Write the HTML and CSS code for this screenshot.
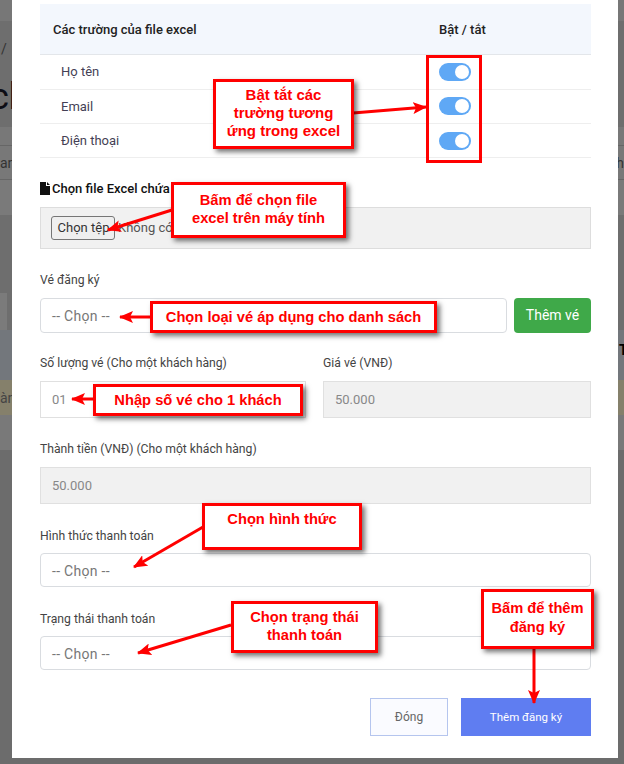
FILE: index.html
```html
<!DOCTYPE html>
<html lang="vi">
<head>
  <meta charset="UTF-8" />
  <title>Thêm đăng ký</title>
  <link rel="stylesheet" href="styles.css">
</head>
<body>
  <div class="trang-nen">
    <div class="dai dai-dau"></div>
    <div class="dai dai-tieude">
      <span class="gach">/</span>
      <span class="tieude-lon">ch</span>
    </div>
    <div class="dai dai-sang"></div>
    <div class="dai dai-bang"><span>an</span><span>ah</span></div>
    <div class="dai dai-sang2"></div>
    <div class="dai dai-toi"></div>
    <div class="dai dai-o"><span class="o-nho"></span></div>
    <div class="dai dai-xanh"><span></span><strong>T</strong></div>
    <div class="dai dai-vang"><span>àn</span></div>
    <div class="dai dai-sang3"></div>
  </div>

  <div class="hop-thoai">
    <table class="bang-truong">
      <thead>
        <tr>
          <th>Các trường của file excel</th>
          <th class="cot-bat">Bật / tắt</th>
        </tr>
      </thead>
      <tbody>
        <tr>
          <td>Họ tên</td>
          <td class="cot-bat"><span class="cong-tac"></span></td>
        </tr>
        <tr>
          <td>Email</td>
          <td class="cot-bat"><span class="cong-tac"></span></td>
        </tr>
        <tr>
          <td>Điện thoại</td>
          <td class="cot-bat"><span class="cong-tac"></span></td>
        </tr>
      </tbody>
    </table>

    <div class="nhan-file">
      <svg width="10" height="13" viewBox="0 0 10 13"><path d="M0 0H6V4H10V13H0Z M7 0L10 3H7Z" fill="#111"/></svg>
      <span>Chọn file Excel chứa danh sách</span>
    </div>
    <div class="o-file">
      <button class="nut-tep">Chọn tệp</button>
      <span>Không có tệp nào được chọn</span>
    </div>

    <label class="nhan nhan-ve">Vé đăng ký</label>
    <div class="hang-ve">
      <div class="o-chon">-- Chọn --</div>
      <button class="nut-them-ve">Thêm vé</button>
    </div>

    <div class="hang-doi">
      <div>
        <label class="nhan">Số lượng vé (Cho một khách hàng)</label>
        <div class="o-nhap">01</div>
      </div>
      <div>
        <label class="nhan">Giá vé (VNĐ)</label>
        <div class="o-nhap o-khoa">50.000</div>
      </div>
    </div>

    <label class="nhan">Thành tiền (VNĐ) (Cho một khách hàng)</label>
    <div class="o-nhap o-khoa">50.000</div>

    <label class="nhan nhan-tt">Hình thức thanh toán</label>
    <div class="o-chon">-- Chọn --</div>

    <label class="nhan nhan-tt">Trạng thái thanh toán</label>
    <div class="o-chon">-- Chọn --</div>

    <div class="chan-hop">
      <button class="nut-dong">Đóng</button>
      <button class="nut-them">Thêm đăng ký</button>
    </div>
  </div>

  <!-- phan ghi chu mau do ve de len tren -->
  <svg class="mui-ten" width="624" height="764" viewBox="0 0 624 764">
    <defs>
      <marker id="dau" markerUnits="userSpaceOnUse" markerWidth="14" markerHeight="12" refX="13" refY="6" orient="auto">
        <path d="M0 0L14 6L0 12L3 6Z" fill="#f00"/>
      </marker>
    </defs>
    <g stroke="#f00" stroke-width="3" marker-end="url(#dau)">
      <line x1="353" y1="113" x2="426" y2="107"/>
      <line x1="172" y1="210" x2="108" y2="230"/>
      <line x1="150" y1="317" x2="120" y2="317"/>
      <line x1="93" y1="399" x2="72" y2="399"/>
      <line x1="203" y1="527" x2="134" y2="567"/>
      <line x1="231" y1="625" x2="138" y2="653"/>
      <line x1="534" y1="648" x2="534" y2="703"/>
    </g>
  </svg>
  <div class="khung-bat"></div>
  <div class="ghi-chu gc-bat">Bật tắt các<br>trường tương<br>ứng trong excel</div>
  <div class="ghi-chu gc-file">Bấm để chọn file<br>excel trên máy tính</div>
  <div class="ghi-chu gc-ve">Chọn loại vé áp dụng cho danh sách</div>
  <div class="ghi-chu gc-so">Nhập số vé cho 1 khách</div>
  <div class="ghi-chu gc-hinh">Chọn hình thức</div>
  <div class="ghi-chu gc-trang">Chọn trạng thái<br>thanh toán</div>
  <div class="ghi-chu gc-them">Bấm để thêm<br>đăng ký</div>
</body>
</html>
```

FILE: styles.css
```css
* {
  box-sizing: border-box;
}

body {
  margin: 0;
  width: 624px;
  height: 764px;
  overflow: hidden;
  position: relative;
  font-family: "Roboto", "Noto Sans", sans-serif;
  font-size: 12.2px;
  color: #444;
  background-color: #6c6c6c;
}

/* trang phia sau, bi lam toi */
.trang-nen {
  position: absolute;
  inset: 0;
}

.dai {
  display: flex;
  justify-content: space-between;
  align-items: center;
  font-size: 14px;
  color: #333;
}

.dai-dau { height: 21px; background-color: #777; }
.dai-tieude { height: 106px; background-color: #6e6e6e; display: block; }
.dai-sang { height: 18px; background-color: #787878; }
.dai-bang { height: 35px; background-color: #787878; border-top: 1px solid #666; border-bottom: 1px solid #666; }
.dai-sang2 { height: 35px; background-color: #7a7a7a; }
.dai-toi { height: 78px; background-color: #6e6e6e; }
.dai-o { height: 37px; background-color: #6e6e6e; align-items: stretch; }
.dai-xanh { height: 50px; background-color: #73777c; align-items: flex-end; padding: 0 0 22px 619px; color: #000; }
.dai-vang { height: 35px; background-color: #85806b; color: #444; }
.dai-sang3 { height: 35px; background-color: #797979; }

.o-nho {
  width: 7px;
  background-color: #7b7b7b;
}

.gach {
  display: block;
  padding: 20px 0 0 1px;
  line-height: 16px;
}

.tieude-lon {
  display: block;
  margin: 20px 0 0 -10px;
  font-size: 36px;
  line-height: 40px;
  color: #0c0c14;
}

.hop-thoai {
  position: absolute;
  top: 0;
  left: 12px;
  width: 606px;
  height: 758px;
  padding: 4px 27px 0 28px;
  background-color: #fff;
}

.bang-truong {
  width: 551px;
  border-collapse: collapse;
  table-layout: fixed;
}

.bang-truong th {
  height: 50px;
  padding: 2px 0 0 13px;
  text-align: left;
  font-size: 13px;
  font-weight: 500;
  color: #222;
  background-color: #f3f7fd;
  border-bottom: 1px solid #e3e6ea;
}

.bang-truong td {
  height: 34px;
  padding: 0 0 0 21px;
  font-size: 13px;
  color: #443f55;
  border-bottom: 1px solid #eee;
}

.bang-truong tbody tr:first-child td {
  height: 35px;
}

.bang-truong .cot-bat {
  width: 152px;
  padding: 0;
}

.bang-truong th.cot-bat {
  padding-top: 2px;
}

.bang-truong td.cot-bat {
  line-height: 0;
}

.bang-truong tbody tr:last-child .cot-bat {
  padding-top: 2px;
}

.cong-tac {
  display: inline-block;
  position: relative;
  width: 32px;
  height: 18px;
  border-radius: 9px;
  background-color: #5fa8f5;
}

.cong-tac::after {
  content: "";
  position: absolute;
  top: 2px;
  right: 2px;
  width: 14px;
  height: 14px;
  border-radius: 50%;
  background-color: #fff;
}

.nhan-file {
  display: flex;
  align-items: center;
  gap: 2px;
  margin-top: 24px;
  font-size: 13px;
  font-weight: 500;
  line-height: 14px;
  color: #111;
}

.o-file {
  display: flex;
  align-items: center;
  gap: 3px;
  height: 42px;
  margin-top: 11px;
  padding-left: 10px;
  font-size: 13px;
  color: #555;
  background-color: #f1f1f1;
  border: 1px solid #ddd;
}

.nut-tep {
  width: 64px;
  height: 24px;
  padding: 0 0 0 1px;
  font-family: inherit;
  font-size: 13px;
  color: #333;
  background-color: #efefef;
  border: 1px solid #767676;
  border-radius: 3px;
}

.nhan {
  display: block;
  height: 18px;
  margin: 22px 0 9px;
  line-height: 18px;
  color: #444;
}

.nhan-tt {
  margin: 23px 0 8px;
}

.hang-ve {
  display: grid;
  grid-template-columns: 467px 77px;
  gap: 7px;
}

.o-chon {
  height: 34px;
  padding-left: 11px;
  line-height: 34px;
  font-size: 14px;
  letter-spacing: 0.3px;
  color: #777;
  background-color: #fff;
  border: 1px solid #d9dce0;
  border-radius: 4px;
}

.hang-ve .o-chon {
  height: 35px;
}

.nut-them-ve {
  height: 35px;
  padding: 0;
  font-family: inherit;
  font-size: 14px;
  color: #fff;
  background-color: #3fa949;
  border: none;
  border-radius: 4px;
}

.hang-doi {
  display: grid;
  grid-template-columns: 266px 268px;
  gap: 17px;
}

.hang-doi .nhan {
  margin-top: 21px;
}

.o-nhap {
  height: 37px;
  padding-left: 11px;
  line-height: 35px;
  font-size: 13px;
  color: #888;
  background-color: #fff;
  border: 1px solid #e0e0e0;
}

.o-khoa {
  background-color: #f1f1f1;
}

.chan-hop {
  display: flex;
  justify-content: flex-end;
  gap: 13px;
  margin-top: 28px;
}

.nut-dong,
.nut-them {
  height: 38px;
  padding: 0;
  font-family: inherit;
}

.nut-dong {
  width: 78px;
  font-size: 12px;
  color: #666;
  background-color: #fafbff;
  border: 1px solid #b5c5ee;
}

.nut-them {
  width: 130px;
  font-size: 11.5px;
  color: #fff;
  background-color: #5f7df1;
  border: none;
}

.mui-ten {
  position: absolute;
  top: 0;
  left: 0;
}

.khung-bat {
  position: absolute;
  left: 426px;
  top: 55px;
  width: 56px;
  height: 108px;
  border: 3px solid #f00;
}

.ghi-chu {
  position: absolute;
  padding-top: 4px;
  font-family: "Liberation Sans", Arial, sans-serif;
  font-size: 14.7px;
  font-weight: bold;
  line-height: 18px;
  text-align: center;
  color: #f00;
  background-color: #fff;
  border: 3px solid #f00;
  box-shadow: 3px 3px 5px rgba(0, 0, 0, 0.55);
}

.gc-bat { left: 213px; top: 79px; width: 141px; height: 70px; font-size: 15px; }
.gc-file { left: 171px; top: 182px; width: 175px; height: 56px; padding-top: 6px; }
.gc-ve { left: 150px; top: 301px; width: 287px; height: 32px; }
.gc-so { left: 93px; top: 384px; width: 210px; height: 32px; }
.gc-hinh { left: 202px; top: 503px; width: 160px; height: 47px; }
.gc-trang { left: 231px; top: 601px; width: 147px; height: 52px; }
.gc-them { left: 481px; top: 589px; width: 113px; height: 60px; padding-top: 7px; line-height: 19px; }
```
